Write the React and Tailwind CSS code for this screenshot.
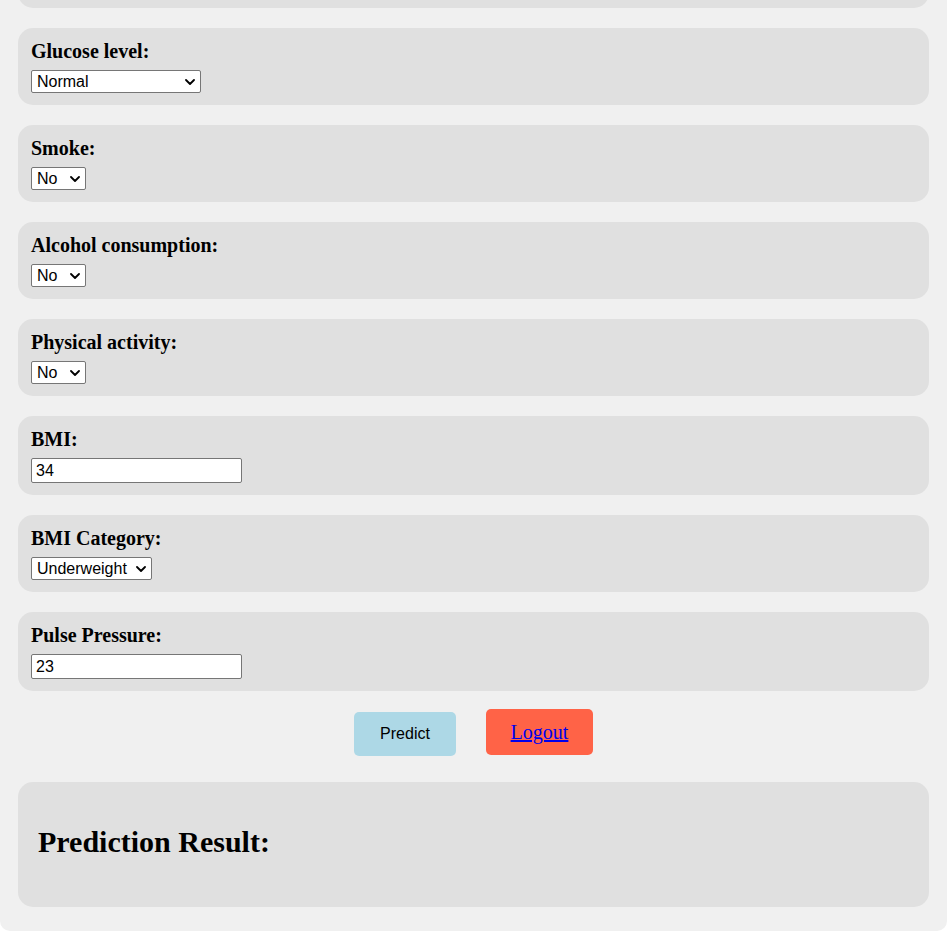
import React from "react";

const serif = { fontFamily: '"Liberation Serif", "Times New Roman", serif' };
const sans = { fontFamily: '"Liberation Sans", Arial, sans-serif' };

function Chevron() {
  return (
    <svg
      className="pointer-events-none absolute right-[6px] top-1/2 -translate-y-1/2"
      width="10"
      height="6"
      viewBox="0 0 10 6"
      fill="none"
    >
      <path d="M1 1 L5 5 L9 1" stroke="#000" strokeWidth="1.8" strokeLinecap="round" strokeLinejoin="round" />
    </svg>
  );
}

function Select({ value, options, width }) {
  return (
    <div className="relative block" style={{ width }}>
      <select
        defaultValue={value}
        className="block h-[23px] w-full appearance-none rounded-[2px] border border-[#767676] bg-white pl-[5px] pr-[20px] text-[16px] leading-[21px] text-black"
        style={sans}
      >
        {options.map((o) => (
          <option key={o}>{o}</option>
        ))}
      </select>
      <Chevron />
    </div>
  );
}

function TextInput({ value }) {
  return (
    <input
      type="text"
      defaultValue={value}
      className="block h-[25px] w-[211px] rounded-[2px] border border-[#767676] bg-white pl-[4px] text-[16px] text-black"
      style={sans}
    />
  );
}

function Group({ label, children }) {
  return (
    <div className="mb-[20px] rounded-[15px] bg-[#e0e0e0] px-[13px] py-[12px]">
      <label className="mb-[7px] block text-[20px] font-bold leading-[23px] text-black" style={serif}>
        {label}
      </label>
      {children}
    </div>
  );
}

export default function App() {
  return (
    <div className="min-h-screen bg-white">
      <div className="overflow-hidden rounded-b-[10px] bg-[#f0f0f0] px-[18px] pb-[24px]">
        <div className="mb-[20px] mt-[-40px] h-[48px] rounded-[15px] bg-[#e0e0e0]" />
        <Group label="Glucose level:">
          <Select value="Normal" options={["Normal", "Above Normal", "Well Above Normal"]} width={170} />
        </Group>
        <Group label="Smoke:">
          <Select value="No" options={["No", "Yes"]} width={55} />
        </Group>
        <Group label="Alcohol consumption:">
          <Select value="No" options={["No", "Yes"]} width={55} />
        </Group>
        <Group label="Physical activity:">
          <Select value="No" options={["No", "Yes"]} width={55} />
        </Group>
        <Group label="BMI:">
          <TextInput value="34" />
        </Group>
        <Group label="BMI Category:">
          <Select value="Underweight" options={["Underweight", "Normal", "Overweight", "Obese"]} width={121} />
        </Group>
        <Group label="Pulse Pressure:">
          <TextInput value="23" />
        </Group>

        <div className="mt-[-2px] flex items-start justify-center gap-[30px]">
          <button
            className="mt-[3px] flex h-[44px] w-[102px] items-center justify-center rounded-[5px] bg-[#add8e6] text-[16px] text-black"
            style={sans}
          >
            Predict
          </button>
          <div className="flex h-[46px] w-[107px] items-center justify-center rounded-[5px] bg-[#ff6347]">
            <a href="#" className="text-[20px] text-[#0000ee] underline" style={serif}>
              Logout
            </a>
          </div>
        </div>

        <div className="mt-[26px] rounded-[15px] bg-[#e0e0e0] p-[20px]">
          <h2 className="mb-[28px] mt-[22px] text-[30px] font-bold leading-[35px] text-black" style={serif}>
            Prediction Result:
          </h2>
        </div>
      </div>
    </div>
  );
}
